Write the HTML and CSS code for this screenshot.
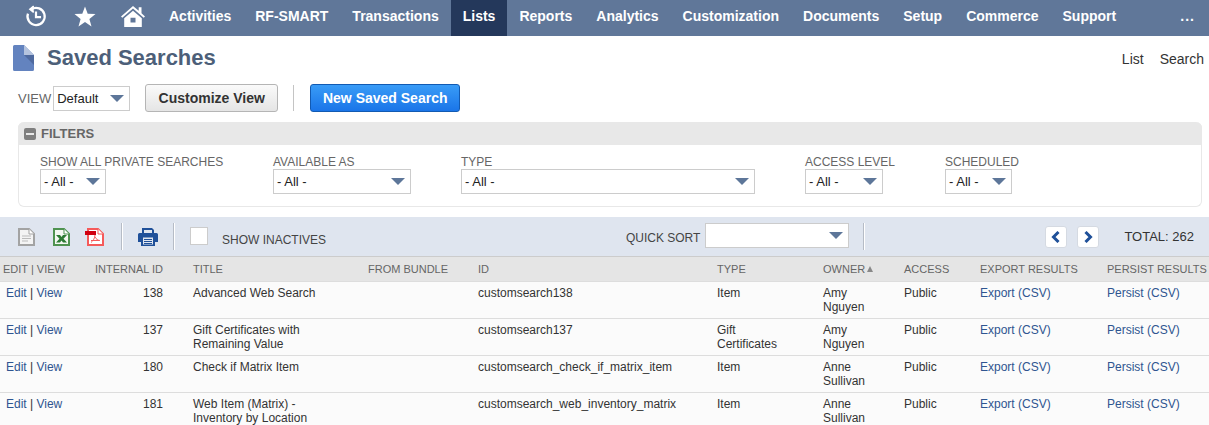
FILE: index.html
```html
<!DOCTYPE html>
<html lang="en">
<head>
    <meta charset="UTF-8">
    <title>Saved Searches</title>
    <link rel="stylesheet" href="styles.css">
</head>
<body>
    <nav class="topnav">
        <div class="nav-icons">
            <svg class="ico-recent" width="22" height="22" viewBox="0 0 24 24" fill="none" stroke="#fff" stroke-width="2.4">
                <path d="M7 4.600A9.400 9.400 0 1 1 3.200 9.500"/>
                <path d="M9.500 1.200L5.400 4.600L9.500 8" stroke-width="1.800" fill="#fff"/>
                <path d="M12 7v6.200h5.500"/>
            </svg>
            <svg class="ico-star" width="22" height="22" viewBox="0 0 22 22" fill="#fff">
                <path d="M11 .5l2.700 7.300 7.800.3-6.100 4.800 2.100 7.600-6.500-4.400-6.500 4.400 2.100-7.600L.5 8.100l7.800-.3z"/>
            </svg>
            <svg class="ico-home" width="24" height="22" viewBox="0 0 24 24" preserveAspectRatio="none" fill="#fff">
                <path d="M12 1L0 12.500l1.300 1.300L12 3.800l10.700 10 1.300-1.300-3.500-3.400V2.500h-2.800v3.900z"/>
                <path d="M12 6.300L3.200 14.500V24h17.600v-9.500zM9.500 14h5v5h-5z" fill-rule="evenodd"/>
            </svg>
        </div>
        <ul class="nav-menu">
            <li>Activities</li>
            <li>RF-SMART</li>
            <li>Transactions</li>
            <li class="active">Lists</li>
            <li>Reports</li>
            <li>Analytics</li>
            <li>Customization</li>
            <li>Documents</li>
            <li>Setup</li>
            <li>Commerce</li>
            <li>Support</li>
        </ul>
        <div class="nav-more">...</div>
    </nav>

    <header class="page-head">
        <svg class="page-icon" width="21" height="26" viewBox="0 0 21 26">
            <path d="M1.500 0H11l10 10v14.500a1.500 1.500 0 0 1-1.500 1.500h-18A1.500 1.500 0 0 1 0 24.500v-23A1.500 1.500 0 0 1 1.500 0z" fill="#6383bf"/>
            <path d="M11 10h10v10z" fill="#4f6a9f"/>
            <path d="M11 0l10 10H11z" fill="#b4c3de"/>
        </svg>
        <h1>Saved Searches</h1>
        <div class="page-links"><span>List</span><span>Search</span></div>
    </header>

    <div class="view-bar">
        <span class="field-label">VIEW</span>
        <div class="sel sel-view"><span>Default</span><i class="caret"></i></div>
        <button class="btn btn-grey">Customize View</button>
        <span class="vline"></span>
        <button class="btn btn-blue">New Saved Search</button>
    </div>

    <section class="filters">
        <div class="filters-head"><span class="minus"></span>FILTERS</div>
        <div class="filters-body">
            <div class="filter f-private">
                <label>SHOW ALL PRIVATE SEARCHES</label>
                <div class="sel"><span>- All -</span><i class="caret"></i></div>
            </div>
            <div class="filter f-avail">
                <label>AVAILABLE AS</label>
                <div class="sel"><span>- All -</span><i class="caret"></i></div>
            </div>
            <div class="filter f-type">
                <label>TYPE</label>
                <div class="sel"><span>- All -</span><i class="caret"></i></div>
            </div>
            <div class="filter f-access">
                <label>ACCESS LEVEL</label>
                <div class="sel"><span>- All -</span><i class="caret"></i></div>
            </div>
            <div class="filter f-sched">
                <label>SCHEDULED</label>
                <div class="sel"><span>- All -</span><i class="caret"></i></div>
            </div>
        </div>
    </section>

    <div class="toolbar">
        <svg class="tool t-doc" width="17" height="18" viewBox="0 0 17 18">
            <path d="M1 1h10l5 5v11H1z" fill="#f4f4f4" stroke="#a3a3a3" stroke-width="2"/>
            <path d="M11 1v5h5" fill="#fff" stroke="#a3a3a3"/>
            <path d="M4 8h9M4 10.500h9M4 13h6" stroke="#bbb"/>
        </svg>
        <svg class="tool t-xls" width="17" height="18" viewBox="0 0 17 18">
            <path d="M1 1h10l5 5v11H1z" fill="#f4f8f2" stroke="#4f9350" stroke-width="2"/>
            <path d="M11 1v5h5" fill="#fff" stroke="#4f9350"/>
            <path d="M3 7h4l1.500 2L10 7h4l-3.500 3.800 3.500 3.700h-4l-1.500-2-1.500 2H3l3.500-3.700z" fill="#2c7a33"/>
        </svg>
        <svg class="tool t-pdf" width="19" height="18" viewBox="0 0 19 18">
            <path d="M3 1h10l5 5v11H3z" fill="#fff" stroke="#f55a5a" stroke-width="2"/>
            <path d="M13 1v5h5" fill="#fff" stroke="#f55a5a"/>
            <path d="M10 7c0 3-2 6-4 7.500M10 9c1 2 3 3.500 5 3.500M6 12.500h8" fill="none" stroke="#f55a5a"/>
            <rect x="0" y="3" width="11" height="4" fill="#d00010"/>
        </svg>
        <span class="tool-sep"></span>
        <svg class="tool t-print" width="20" height="18" viewBox="0 0 20 18">
            <path d="M4 0h10l2 2v4H4z" fill="#1f5099"/>
            <rect x="6" y="2" width="8" height="3" fill="#dfe5ef"/>
            <path d="M1.500 5h17A1.500 1.500 0 0 1 20 6.500V14h-3v4H3v-4H0V6.500A1.500 1.500 0 0 1 1.500 5z" fill="#1f5099"/>
            <rect x="5" y="9.500" width="10" height="7" fill="#dfe5ef"/>
            <path d="M6 11.500h8M6 13.500h8M6 15.500h8" stroke="#1f5099"/>
        </svg>
        <span class="tool-sep sep-2"></span>
        <span class="checkbox"></span>
        <span class="show-inactive">SHOW INACTIVES</span>
        <span class="quick-label">QUICK SORT</span>
        <div class="sel sel-quick"><span></span><i class="caret"></i></div>
        <span class="tool-sep sep-3"></span>
        <button class="pager">
            <svg width="10" height="12" viewBox="0 0 10 12"><path d="M7.500 1L2.500 6l5 5" fill="none" stroke="#1f5099" stroke-width="3"/></svg>
        </button>
        <button class="pager pager-next">
            <svg width="10" height="12" viewBox="0 0 10 12"><path d="M2.500 1l5 5-5 5" fill="none" stroke="#1f5099" stroke-width="3"/></svg>
        </button>
        <span class="total">TOTAL: 262</span>
    </div>

    <table class="results">
        <colgroup>
            <col class="c-edit"><col class="c-int"><col class="c-title"><col class="c-bundle"><col class="c-id">
            <col class="c-type"><col class="c-owner"><col class="c-access"><col class="c-export"><col class="c-persist">
        </colgroup>
        <thead>
            <tr>
                <th>EDIT | VIEW</th>
                <th class="num">INTERNAL ID</th>
                <th>TITLE</th>
                <th>FROM BUNDLE</th>
                <th>ID</th>
                <th>TYPE</th>
                <th>OWNER<span class="sort-up"></span></th>
                <th>ACCESS</th>
                <th>EXPORT RESULTS</th>
                <th>PERSIST RESULTS</th>
            </tr>
        </thead>
        <tbody>
            <tr>
                <td class="edit"><a>Edit</a> | <a>View</a></td>
                <td class="num">138</td>
                <td class="title">Advanced Web Search</td>
                <td></td>
                <td>customsearch138</td>
                <td class="type">Item</td>
                <td class="owner">Amy Nguyen</td>
                <td>Public</td>
                <td><a>Export (CSV)</a></td>
                <td><a>Persist (CSV)</a></td>
            </tr>
            <tr>
                <td class="edit"><a>Edit</a> | <a>View</a></td>
                <td class="num">137</td>
                <td class="title">Gift Certificates with Remaining Value</td>
                <td></td>
                <td>customsearch137</td>
                <td class="type">Gift Certificates</td>
                <td class="owner">Amy Nguyen</td>
                <td>Public</td>
                <td><a>Export (CSV)</a></td>
                <td><a>Persist (CSV)</a></td>
            </tr>
            <tr>
                <td class="edit"><a>Edit</a> | <a>View</a></td>
                <td class="num">180</td>
                <td class="title">Check if Matrix Item</td>
                <td></td>
                <td>customsearch_check_if_matrix_item</td>
                <td class="type">Item</td>
                <td class="owner">Anne Sullivan</td>
                <td>Public</td>
                <td><a>Export (CSV)</a></td>
                <td><a>Persist (CSV)</a></td>
            </tr>
            <tr>
                <td class="edit"><a>Edit</a> | <a>View</a></td>
                <td class="num">181</td>
                <td class="title">Web Item (Matrix) - Inventory by Location</td>
                <td></td>
                <td>customsearch_web_inventory_matrix</td>
                <td class="type">Item</td>
                <td class="owner">Anne Sullivan</td>
                <td>Public</td>
                <td><a>Export (CSV)</a></td>
                <td><a>Persist (CSV)</a></td>
            </tr>
        </tbody>
    </table>
</body>
</html>
```

FILE: styles.css
```css
html, body {
    margin: 0;
    height: 425px;
    overflow: hidden;
}

body {
    font-family: "Liberation Sans", Arial, sans-serif;
    font-size: 12px;
    color: #333;
    background-color: #fff;
}

/* top navigation */
.topnav {
    display: flex;
    height: 36px;
    background-color: #607799;
    color: #fff;
}

.nav-icons {
    display: flex;
    align-items: center;
    width: 157px;
    padding-left: 25px;
    box-sizing: border-box;
}

.ico-recent {
    margin-right: 27px;
    margin-bottom: 5px;
}

.ico-star {
    margin-right: 25px;
    margin-bottom: 2px;
}

.ico-home {
    margin-bottom: 5px;
}

.nav-menu {
    display: flex;
    list-style: none;
    margin: 0;
    padding: 0;
}

.nav-menu li {
    padding: 0 12px;
    font-size: 14px;
    font-weight: bold;
    line-height: 33px;
}

.nav-menu li.active {
    background-color: #24385b;
}

.nav-more {
    margin-left: auto;
    margin-right: 14px;
    font-size: 14px;
    font-weight: bold;
    line-height: 33px;
    letter-spacing: 1px;
}

/* page title */
.page-head {
    display: flex;
    align-items: flex-start;
    height: 48px;
    padding: 9px 5px 0 13px;
    box-sizing: border-box;
}

.page-icon {
    margin-right: 13px;
}

.page-head h1 {
    margin: 0;
    font-size: 22px;
    line-height: 26px;
    font-weight: bold;
    color: #4d5f79;
}

.page-links {
    display: flex;
    gap: 16px;
    margin-left: auto;
    margin-top: 5px;
    font-size: 14px;
    line-height: 18px;
}

/* view row */
.view-bar {
    display: flex;
    align-items: center;
    height: 28px;
    padding-left: 18px;
}

.field-label {
    margin-right: 2px;
    font-size: 13px;
    color: #666;
}

.sel {
    display: flex;
    align-items: center;
    justify-content: space-between;
    height: 25px;
    padding: 0 5px 0 3px;
    box-sizing: border-box;
    border: 1px solid #ccc;
    background-color: #fff;
    font-size: 13px;
    color: #222;
}

.sel-view {
    width: 77px;
}

.caret {
    width: 0;
    height: 0;
    border-left: 7px solid transparent;
    border-right: 7px solid transparent;
    border-top: 7px solid #5d7699;
}

.btn {
    height: 28px;
    padding: 0;
    border-radius: 3px;
    font-family: inherit;
    font-size: 14px;
    font-weight: bold;
}

.btn-grey {
    width: 133px;
    margin-left: 15px;
    border: 1px solid #b5b5b5;
    background: linear-gradient(#fafafa, #e5e5e5);
    color: #333;
}

.btn-blue {
    width: 150px;
    border: 1px solid #125ab2;
    background: linear-gradient(#399cf7, #1a75e8);
    color: #fff;
}

.vline {
    width: 1px;
    height: 26px;
    margin: 0 16px 0 15px;
    background-color: #c4c4c4;
}

/* filters */
.filters {
    height: 85px;
    margin: 10px 7px 0 18px;
    box-sizing: border-box;
    border: 1px solid #e8e8e8;
    border-top: 0;
    border-radius: 6px;
}

.filters-head {
    display: flex;
    align-items: center;
    height: 23px;
    margin: 0 -1px;
    padding-left: 6px;
    background-color: #e8e8e8;
    border-radius: 6px 6px 0 0;
    font-size: 13px;
    font-weight: bold;
    color: #666;
}

.minus {
    position: relative;
    width: 12px;
    height: 12px;
    margin-right: 5px;
    border-radius: 2px;
    background-color: #7f7f7f;
}

.minus::after {
    content: "";
    position: absolute;
    left: 2px;
    top: 5px;
    width: 8px;
    height: 2px;
    background-color: #e8e8e8;
}

.filters-body {
    display: flex;
    padding: 10px 0 0 21px;
}

.filter label {
    display: block;
    font-size: 12px;
    line-height: 14px;
    color: #666;
}

.f-private {
    width: 233px;
}

.f-private .sel {
    width: 66px;
}

.f-avail {
    width: 188px;
}

.f-avail .sel {
    width: 138px;
}

.f-type {
    width: 344px;
}

.f-type .sel {
    width: 294px;
}

.f-access {
    width: 140px;
}

.f-access .sel {
    width: 78px;
}

.f-sched .sel {
    width: 67px;
}

/* list toolbar */
.toolbar {
    display: flex;
    align-items: center;
    height: 39px;
    margin-top: 10px;
    padding-left: 18px;
    background-color: #dfe5ef;
}

.tool {
    flex: none;
}

.t-xls {
    margin-left: 18px;
}

.t-pdf {
    margin-left: 15px;
}

.tool-sep {
    width: 1px;
    height: 27px;
    margin-left: 17px;
    background-color: #b6bcc6;
    box-shadow: 1px 0 0 #fff;
}

.t-print {
    margin-left: 16px;
}

.sep-2 {
    margin-left: 15px;
}

.checkbox {
    width: 16px;
    height: 16px;
    margin-left: 16px;
    margin-bottom: 2px;
    border: 1px solid #ccc;
    background-color: #fff;
}

.show-inactive {
    margin-left: 14px;
    padding-top: 6px;
    color: #444;
}

.quick-label {
    margin-left: auto;
    padding-top: 3px;
    color: #444;
}

.sel-quick {
    width: 144px;
    margin-left: 5px;
    margin-bottom: 2px;
}

.sep-3 {
    margin-left: 14px;
}

.pager {
    display: flex;
    align-items: center;
    justify-content: center;
    width: 22px;
    height: 22px;
    margin-left: 181px;
    padding: 0;
    border: 1px solid #d5dae2;
    border-radius: 3px;
    background-color: #fff;
}

.pager-next {
    margin-left: 10px;
}

.total {
    margin-left: 25px;
    margin-right: 15px;
    font-size: 13px;
    color: #333;
}

/* results table */
.results {
    width: 1209px;
    table-layout: fixed;
    border-collapse: collapse;
    border-top: 1px solid #ccc;
}

.c-edit { width: 90px; }
.c-int { width: 100px; }
.c-title { width: 175px; }
.c-bundle { width: 110px; }
.c-id { width: 239px; }
.c-type { width: 106px; }
.c-owner { width: 81px; }
.c-access { width: 76px; }
.c-export { width: 127px; }
.c-persist { width: 105px; }

.results th {
    height: 24px;
    padding: 0 0 0 3px;
    background-color: #e5e5e5;
    border-bottom: 1px solid #ddd;
    font-weight: normal;
    font-size: 11px;
    text-align: left;
    color: #666;
    white-space: nowrap;
}

.results td {
    height: 28px;
    padding: 4px 0 4px 3px;
    background-color: #fbfbfb;
    border-bottom: 1px solid #ddd;
    line-height: 14px;
    vertical-align: top;
}

.results .num {
    padding-right: 27px;
    text-align: right;
}

.results .edit {
    padding-left: 6px;
}

.results .title {
    padding-right: 30px;
}

.results .type {
    padding-right: 40px;
}

.results .owner {
    padding-right: 20px;
}

.results a {
    color: #2f5590;
}

.sort-up {
    display: inline-block;
    margin-left: 2px;
    vertical-align: 1px;
    border-left: 3px solid transparent;
    border-right: 3px solid transparent;
    border-bottom: 6px solid #888;
}
```
